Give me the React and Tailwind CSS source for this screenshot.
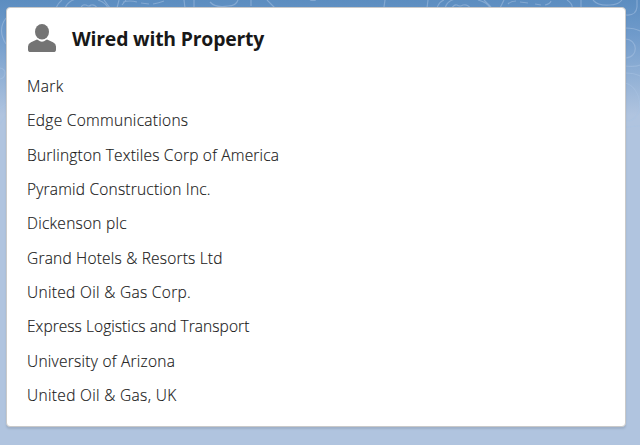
const properties = [
  { name: 'Mark', tracking: 'tracking-[0.35px]' },
  { name: 'Edge Communications', tracking: 'tracking-[0.28px]' },
  { name: 'Burlington Textiles Corp of America', tracking: 'tracking-[0.2px]' },
  { name: 'Pyramid Construction Inc.', tracking: 'tracking-[0.2px]' },
  { name: 'Dickenson plc', tracking: 'tracking-[0.26px]' },
  { name: 'Grand Hotels & Resorts Ltd', tracking: 'tracking-[0.2px]' },
  { name: 'United Oil & Gas Corp.', tracking: 'tracking-[0.32px]' },
  { name: 'Express Logistics and Transport', tracking: 'tracking-[0.06px]' },
  { name: 'University of Arizona', tracking: 'tracking-[0.26px]' },
  { name: 'United Oil & Gas, UK', tracking: 'tracking-[0.33px]' },
];

function ContourPattern() {
  return (
    <svg className="absolute inset-0 h-[150px] w-full" viewBox="0 0 640 150" fill="none" stroke="#a9c4e3" strokeOpacity="0.5" strokeWidth="1.2">
      <path d="M56 8Q58 3 62 0M65 8Q68 1 76-1M81 8Q82 4 86 5Q89 7 91 5Q95 4 97 8M98 0Q106 3 108 8M104 0L110 8M117 8L119 0" />
      <path d="M123 2Q130 0 137 2M141 3L149 4M153 4Q159 3 164 1M126 0L122 5M184 0L185 8M194 0V8" />
      <path d="M210 2Q215 8 228 6Q236 6 238 0M251 0V6M267 0L275 8M310 0Q313 1 316 0M385 0L384 7M428 0L427 8" />
      <path d="M437 8Q439 2 444 0M445 8Q447 1 455-1M452 8Q454 4 457 5Q460 7 463 5Q468 4 470 8M478 0Q488 3 490 8M484 0L491 7M500 8L504 0" />
      <path d="M508 4Q511 1 516 1M520 2L528 3M535 4L541 5M545 5Q550 4 551 1M567 0Q573 4 572 8M581 0V8" />
      <path d="M593 0Q598 6 610 5Q618 5 622 0M626 15Q636 16 637 7V0M625 28Q635 28 640 31M625 39C638 39 639 57 626 58M625 66Q635 67 640 65M625 73Q635 73 640 76M625 83C643 87 646 122 625 121M625 127L640 126" />
      <path d="M6 18Q-3 30 6 44M0 68Q5 69 5 73Q5 78 0 79M6 104Q4 105 0 108M6 115L0 124" />
    </svg>
  );
}

export default function App() {
  return (
    <main className="relative h-[445px] w-[640px] overflow-hidden bg-[#b0c4df] bg-[linear-gradient(#5c8dc0_0px,#709bcb_35px,#b0c4df_115px)] pt-[7px] pl-[6px] font-['Open_Sans','Noto_Sans',sans-serif]">
      <ContourPattern />
      <section className="relative h-[420px] w-[620px] rounded border border-[#c9c9c9] bg-white pl-5 shadow-[0_2px_2px_rgba(0,0,0,0.1)]">
        <header className="flex h-[61px] items-center">
          <svg className="mb-px ml-px h-7 w-7 shrink-0" viewBox="0 0 28 28" fill="#747474">
            <ellipse cx="14" cy="7.8" rx="7" ry="7.8" />
            <path d="M8.4 15.7Q9.3 15.3 10 16Q14 19.3 18 16Q18.7 15.3 19.6 15.7L25 18.2Q28 19.7 28 22.6V25.4Q28 28 25.4 28H2.6Q0 28 0 25.4V22.6Q0 19.7 3 18.2Z" />
          </svg>
          <h1 className="ml-4 whitespace-nowrap pt-px text-[19.4px] font-bold tracking-[-0.2px] text-[#181818]">Wired with Property</h1>
        </header>
        <ul className="pt-[0.5px]">
          {properties.map(({ name, tracking }) => (
            <li key={name} className={`flex h-[34.35px] items-center whitespace-nowrap text-[15.5px] font-light text-[#181818] [-webkit-text-stroke:0.15px_#181818] ${tracking}`}>{name}</li>
          ))}
        </ul>
      </section>
    </main>
  );
}
